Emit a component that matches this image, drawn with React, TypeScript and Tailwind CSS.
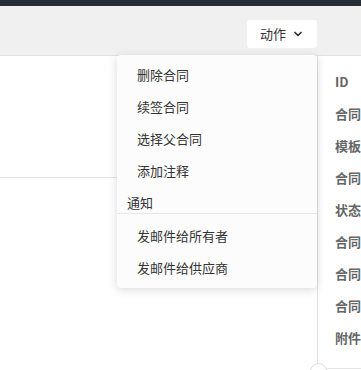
import { ChevronDown } from 'lucide-react'

const actions = ['删除合同', '续签合同', '选择父合同', '添加注释']
const notify = ['发邮件给所有者', '发邮件给供应商']
const labels = ['ID', '合同', '模板', '合同', '状态', '合同', '合同', '合同', '附件']

export default function App() {
  return (
    <div
      className="relative flex h-[370px] w-[361px] flex-col overflow-hidden bg-white text-[13px] text-[#333]"
      style={{ fontFamily: '"Noto Sans CJK SC", "Noto Sans", sans-serif' }}
    >
      <div className="h-[6px] shrink-0 bg-[#262c35]" />

      <header className="flex h-[50px] shrink-0 items-start justify-end border-b border-[#e3e3e3] bg-[#f0f0f0] pr-[44px] pt-[14px]">
        <div className="relative">
          <button className="flex h-[28px] w-[70px] items-center justify-center gap-[6px] rounded-[3px] bg-white text-[13px] text-[#333]">
            动作
            <ChevronDown className="h-[12px] w-[12px]" strokeWidth={3.5} />
          </button>

          <div className="absolute right-0 top-[35px] z-10 w-[200px] rounded-[4px] bg-[#fcfcfc] pb-[4px] pt-[4px] shadow-[0_2px_10px_rgba(0,0,0,0.15)]">
            {actions.map((a) => (
              <div key={a} className="flex h-[32px] items-center pl-[20px]">
                {a}
              </div>
            ))}
            <div className="flex h-[27px] items-center border-b border-[#e6e6e6] pl-[10px] pt-[6px]">通知</div>
            <div className="pt-[6px]">
              {notify.map((a) => (
                <div key={a} className="flex h-[32px] items-center pl-[20px]">
                  {a}
                </div>
              ))}
            </div>
          </div>
        </div>
      </header>

      <main className="flex flex-1">
        <section className="flex-1">
          <div className="h-[122px] border-b border-[#e3e3e3]" />
        </section>
        <aside className="w-[44px] border-l border-[#e3e3e3] pl-[17px] pt-[10px]">
          {labels.map((l, i) => (
            <div key={i} className="flex h-[32px] items-center whitespace-nowrap font-bold text-[#666]">
              {l}
            </div>
          ))}
        </aside>
      </main>

      <div className="absolute left-[326px] top-[368px] h-px w-[35px] bg-[#e3e3e3]" />
      <div className="absolute left-[310px] top-[363px] h-[17px] w-[17px] rounded-full border border-[#ddd] bg-white" />
    </div>
  )
}
